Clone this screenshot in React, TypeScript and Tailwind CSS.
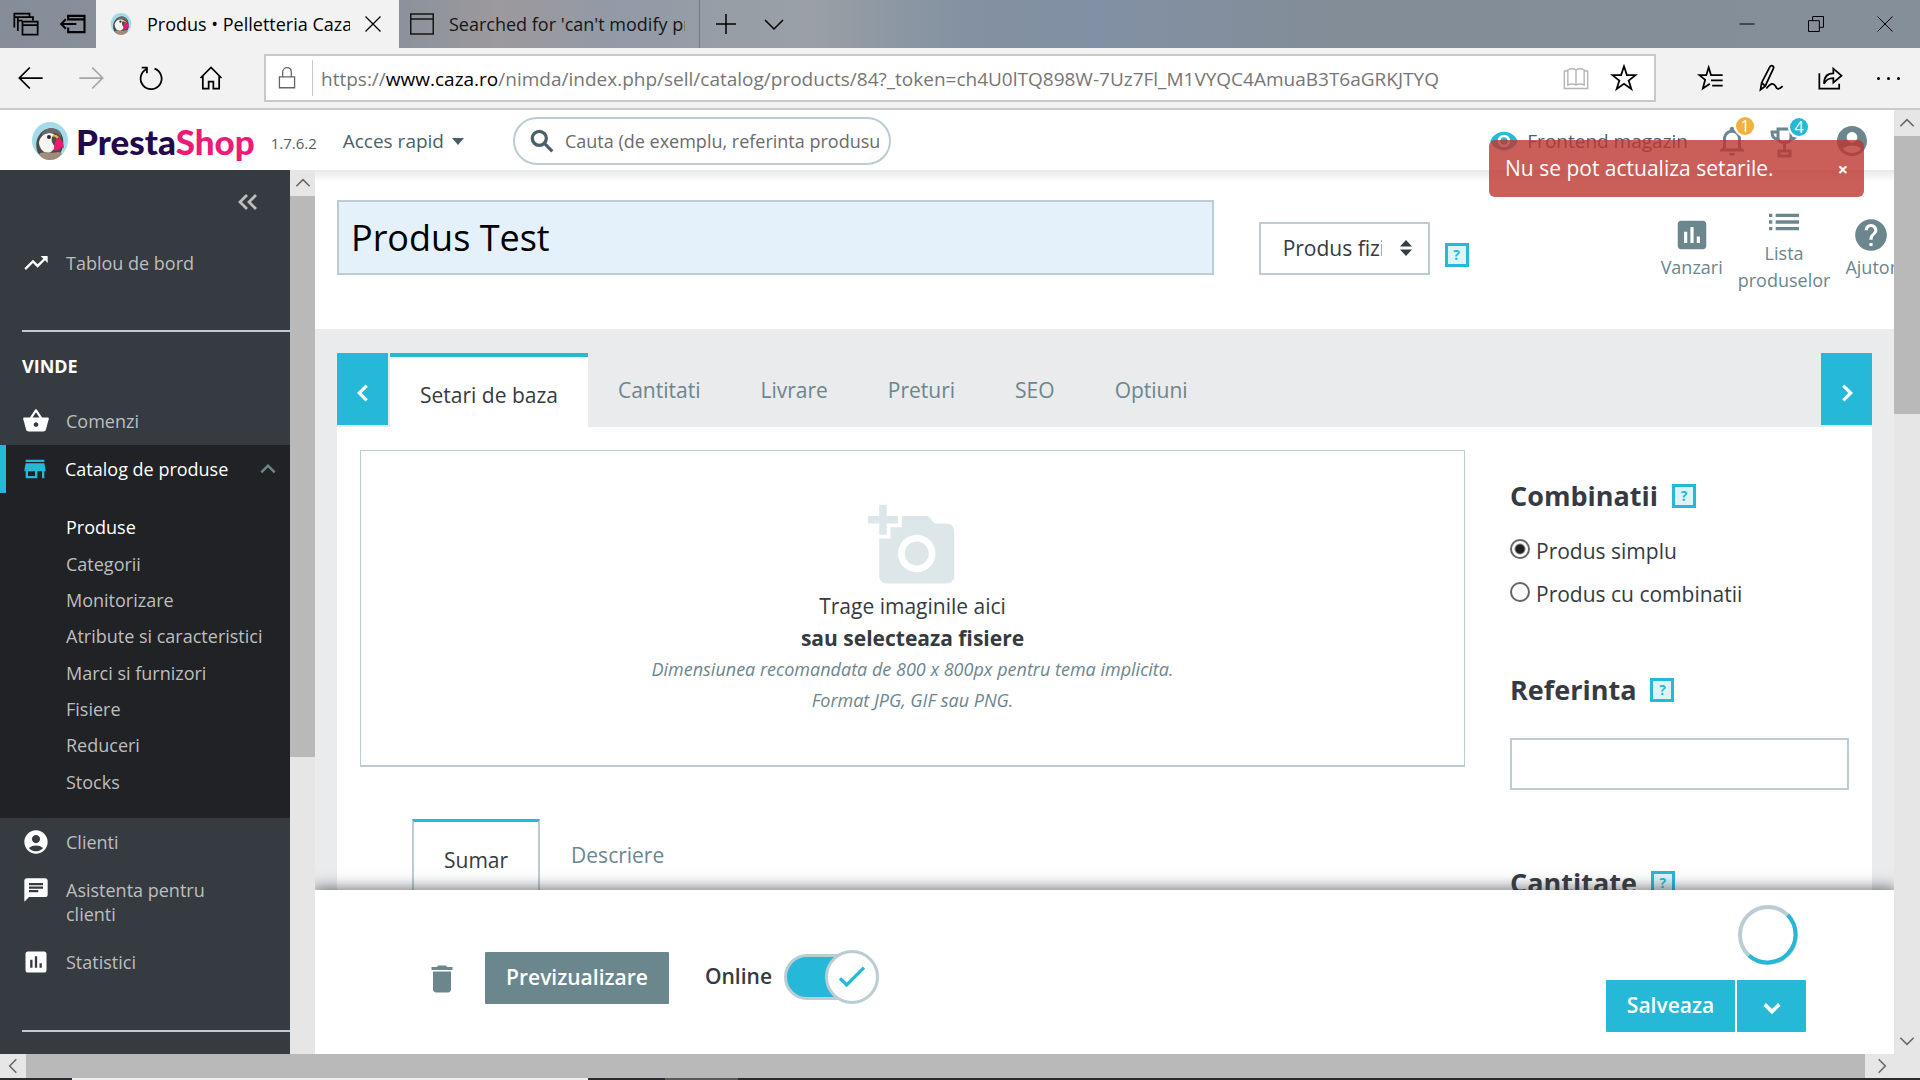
import React from "react";
import {
  MdAccountCircle,
  MdAddAPhoto,
  MdAssessment,
  MdChat,
  MdDelete,
  MdHelp,
  MdList,
  MdNotificationsNone,
  MdShoppingBasket,
  MdStore,
  MdTrendingUp,
  MdVisibility,
} from "react-icons/md";

const catalogLinks = [
  "Produse",
  "Categorii",
  "Monitorizare",
  "Atribute si caracteristici",
  "Marci si furnizori",
  "Fisiere",
  "Reduceri",
  "Stocks",
];

const lowerLinks = [
  { label: "Clienti", icon: MdAccountCircle },
  { label: "Asistenta pentru clienti", icon: MdChat },
  { label: "Statistici", icon: MdAssessment },
];

const productTabs = ["Cantitati", "Livrare", "Preturi", "SEO", "Optiuni"];

type LineIconProps = {
  d: string;
  className?: string;
  size?: number;
  width?: number;
};

// thin outline icon on a 24 grid
function LineIcon({ d, className = "", size = 24, width = 1.5 }: LineIconProps) {
  return (
    <svg
      width={size}
      height={size}
      viewBox="0 0 24 24"
      fill="none"
      stroke="currentColor"
      strokeWidth={width}
      className={`shrink-0 ${className}`}
      aria-hidden="true"
    >
      <path d={d} />
    </svg>
  );
}

function Puffin({ className = "" }: { className?: string }) {
  return (
    <svg viewBox="0 0 36 38" className={`shrink-0 ${className}`} aria-hidden="true">
      <ellipse cx="18" cy="18.500" rx="18" ry="18.500" fill="#a4dbe8" />
      <path d="M6 31C3 24 4 17 8 12c4-6 13-8 19-3 4 4 5 9 4 15-1 6-4 10-8 11-7 2-14 1-17-4z" fill="#4b4a4d" />
      <path d="M7 20c1-5 5-9 10-9 5 0 8 3 8 8-1 6-4 11-9 12-5 0-9-5-9-11z" fill="#f5f4f2" />
      <path d="M9 13C12 6 22 4 27 9c2 2 2 4 2 6-3-4-7-5-11-4-4 0-6 2-9 2z" fill="#6a686a" />
      <path d="M21 13c3-1 6 1 7 4l-4 9c-3-2-5-8-3-13z" fill="#f4b13e" />
      <path d="M20 15c2-1 4 0 5 2l-2 7c-3-2-4-6-3-9z" fill="#4b4a4d" />
      <path d="M26 15c3 2 6 6 6 11l-3-1c-1 3-4 4-7 3 0-5 1-9 4-13z" fill="#ea1a6e" />
      <circle cx="17" cy="15" r="2" fill="#2c2b2d" />
      <path d="M7 32c2-2 5-1 7-2 4 1 8 1 12 0 2 0 3 1 4 2-3 4-7 6-12 6S9 36 7 32z" fill="#a08c7b" />
    </svg>
  );
}

function HelpBox() {
  return (
    <button
      aria-label="Ajutor"
      className="flex h-6 w-6 shrink-0 items-center justify-center border-[3px] border-[#25b9d7] bg-[#def4f9] text-sm leading-none font-bold text-[#25b9d7]"
    >
      ?
    </button>
  );
}

function BrowserTabs() {
  return (
    <div className="flex h-12 shrink-0 items-stretch bg-[linear-gradient(90deg,#858e98_0%,#8b929b_21%,#9d999d_26%,#919aa6_32%,#9aa0a6_42%,#8391a1_50%,#8190a4_57%,#838d97_70%,#858f99_100%)] text-black">
      <div className="flex w-24 items-center gap-5 pl-3">
        <LineIcon size={28} d="M2 15V3h13v3M2 6h13M5 18V6h13v3M5 9h4M9 10h13v11H9zM9 13h13" />
        <LineIcon size={28} width={1.8} d="M7 9V5h14v14H7v-4M7 8h14M1 12h13M5 8l-4 4 4 4" />
      </div>
      <div className="flex w-[303px] items-center bg-[#f2f2f2] pr-4 pl-[14px]">
        <Puffin className="h-[22px] w-[22px]" />
        <span className="ml-[15px] w-[203px] overflow-hidden text-lg whitespace-nowrap">
          Produs • Pelletteria Caza
        </span>
        <button aria-label="Inchide fila" className="ml-auto">
          <LineIcon size={20} d="M3 3l18 18M21 3L3 21" />
        </button>
      </div>
      <div className="flex w-[301px] items-center border-r border-[#6f7780] pl-2 text-[#161616]">
        <LineIcon size={30} width={1.2} d="M3 4h18v16H3zM3 8h18" />
        <span className="ml-3 w-[236px] overflow-hidden text-lg whitespace-nowrap">
          Searched for 'can't modify product'
        </span>
      </div>
      <div className="flex items-center gap-6 pl-[14px]">
        <button aria-label="Fila noua">
          <LineIcon d="M12 2v20M2 12h20" />
        </button>
        <button aria-label="Previzualizari file">
          <LineIcon d="M3 8l9 9 9-9" />
        </button>
      </div>
      <div className="ml-auto flex items-center gap-[49px] pr-[25px]">
        <button aria-label="Minimizeaza">
          <LineIcon size={20} width={1.2} d="M3 12h18" />
        </button>
        <button aria-label="Restaureaza">
          <LineIcon size={20} width={1.2} d="M3 8h13v13H3zM8 8V3h13v13h-5" />
        </button>
        <button aria-label="Inchide">
          <LineIcon size={20} width={1.2} d="M3 3l18 18M21 3L3 21" />
        </button>
      </div>
    </div>
  );
}

function BrowserToolbar() {
  return (
    <div className="flex h-[62px] shrink-0 items-center border-b-2 border-[#cbcbcb] bg-[#f2f2f2] text-black">
      <div className="flex w-[264px] items-center gap-8 pl-[17px]">
        <button aria-label="Inapoi">
          <LineIcon size={28} d="M22 12H3M11 3l-9 9 9 9" />
        </button>
        <button aria-label="Inainte" className="text-[#a5a5a5]">
          <LineIcon size={28} d="M2 12h19M13 3l9 9-9 9" />
        </button>
        <button aria-label="Reimprospateaza">
          <LineIcon size={28} d="M15 4A9 9 0 1 1 8 4.500M4 3h4.500v5" />
        </button>
        <button aria-label="Acasa">
          <LineIcon size={28} d="M3 12l9-9 9 9M5 10v11h5v-6h4v6h5V10" />
        </button>
      </div>
      <div className="flex h-12 flex-1 items-center border-2 border-[#c9c9c9] bg-white">
        <LineIcon size={26} width={1.2} className="ml-2 text-[#666]" d="M5 11h14v10H5zM8 11V7c0-6 8-6 8 0v4" />
        <span className="ml-3 h-9 w-px bg-[#c9c9c9]" />
        <span className="ml-2 pt-0.5 text-[19px] whitespace-nowrap text-[#767676]">
          https://<span className="text-black">www.caza.ro</span>
          /nimda/index.php/sell/catalog/products/84?_token=ch4U0lTQ898W-7Uz7Fl_M1VYQC4AmuaB3T6aGRKJTYQ
        </span>
        <LineIcon
          size={28}
          width={1.2}
          className="ml-auto text-[#b5b5b5]"
          d="M12 5c-2-1-5-1-7 0v13c2-1 5-1 7 0 2-1 5-1 7 0V5c-2-1-5-1-7 0v13M5 6H2v15h20V6h-3"
        />
        <button aria-label="Adauga la favorite" className="mr-4 ml-5">
          <LineIcon size={28} d="M12 2l2.500 7.500H22l-6 4.700 2.300 7.300-6.300-4.500-6.300 4.500L8 14.200 2 9.500h7.500z" />
        </button>
      </div>
      <div className="flex w-[264px] items-center gap-8 pl-[41px]">
        <button aria-label="Favorite">
          <LineIcon size={28} d="M13 9.500h-1L10 3 8 9.500H2l5 4L5 21l6-4M13 9.500h9M12 14h10M13 18.500h9" />
        </button>
        <button aria-label="Note">
          <LineIcon size={28} d="M3 22l1-6L11 2.500c1-2 4-1 3 1.500L7 19zM4 16l3 3M8 21c4-5 6-5 8-2 1 3 3 3 6 0" />
        </button>
        <button aria-label="Partajeaza">
          <LineIcon size={28} d="M2 8v13h17v-4M6 17c0-6 3-9 8-9V4l7 6-7 6v-4c-4 0-6 1-8 5z" />
        </button>
        <button aria-label="Setari" className="flex gap-[7px]">
          <i className="h-[3px] w-[3px] rounded-full bg-black" />
          <i className="h-[3px] w-[3px] rounded-full bg-black" />
          <i className="h-[3px] w-[3px] rounded-full bg-black" />
        </button>
      </div>
    </div>
  );
}

function AppHeader() {
  return (
    <header className="relative z-10 flex h-[60px] shrink-0 items-center bg-white pt-0.5 pr-6 pl-8 text-[19px] text-[#4b5f66]">
      <Puffin className="h-[38px] w-9" />
      <span className="ml-2 font-[Lato] text-[35px] leading-none font-black text-[#22094b]">
        Presta<span className="text-[#ee1a75]">Shop</span>
      </span>
      <span className="mt-1 ml-4 w-14 text-[15px]">1.7.6.2</span>
      <button className="ml-4 flex items-center gap-2">
        Acces rapid
        <span className="border-x-[6px] border-t-[7px] border-x-transparent border-t-current" />
      </button>
      <label className="ml-[49px] flex h-12 w-[378px] items-center rounded-full border-2 border-[#bbcdd2] pr-2.5 pl-3.5">
        <LineIcon size={26} width={3} d="M9.500 3a6.500 6.500 0 1 1 0 13 6.500 6.500 0 0 1 0-13zM14.500 14.500l7 7" />
        <input
          type="text"
          aria-label="Cauta"
          placeholder="Cauta (de exemplu, referinta produsului"
          className="ml-2.5 w-[315px] text-lg placeholder:text-[#6b6b6b] focus:outline-none"
        />
      </label>
      <div className="ml-auto flex items-center">
        <a href="#shop" className="flex items-center gap-2">
          <MdVisibility className="h-[30px] w-[30px] text-[#25b9d7]" />
          <span>Frontend magazin</span>
        </a>
        <button aria-label="Notificari" className="relative ml-[26px]">
          <MdNotificationsNone className="h-9 w-9 text-[#6c868e]" />
          <span className="absolute -top-1.5 -right-1 flex h-[18px] w-[18px] items-center justify-center rounded-full bg-[#f1b13d] text-base leading-none text-white ring-2 ring-white">
            1
          </span>
        </button>
        <button aria-label="Realizari" className="relative ml-5">
          <svg viewBox="0 0 30 34" className="h-[34px] w-[30px]" fill="none" stroke="#6c868e" strokeWidth="3">
            <path d="M8 5h13v9c0 6-13 6-13 0zM8 8H2c0 5 2 7 6 7M21 8h6c0 5-2 7-6 7M14.500 19v7M9 27h11v5H9z" />
          </svg>
          <span className="absolute -top-1.5 -right-2 flex h-[18px] w-[18px] items-center justify-center rounded-full bg-[#25b9d7] text-base leading-none text-white ring-2 ring-white">
            4
          </span>
        </button>
        <button aria-label="Cont" className="ml-[34px]">
          <MdAccountCircle className="h-9 w-9 text-[#6c868e]" />
        </button>
      </div>
    </header>
  );
}

function Sidebar() {
  return (
    <nav className="w-[290px] shrink-0 overflow-hidden bg-[#363a41] text-lg leading-6 text-[#bebebe]">
      <div className="flex h-16 items-center justify-end pr-[30px]">
        <button aria-label="Restrange meniul">
          <LineIcon size={24} width={2.8} d="M11 5l-7 7 7 7M20 5l-7 7 7 7" />
        </button>
      </div>
      <a href="#dashboard" className="flex h-[58px] items-center pl-[22px]">
        <MdTrendingUp className="mr-4 h-7 w-7 shrink-0 text-white" />
        Tablou de bord
      </a>
      <hr className="mt-[38px] ml-[22px] border-t-2 border-[#bbcdd2]" />
      <h2 className="mt-[22px] pl-[22px] font-bold text-white">VINDE</h2>
      <a href="#orders" className="mt-[19px] flex h-12 items-center pl-[22px]">
        <MdShoppingBasket className="mr-4 h-7 w-7 shrink-0 text-white" />
        Comenzi
      </a>
      <div className="bg-[#202226] pb-[18px]">
        <a href="#catalog" className="flex h-12 items-center border-l-[6px] border-[#25b9d7] pl-[15px] text-white">
          <MdStore className="mr-4 h-7 w-7 shrink-0 text-[#25b9d7]" />
          Catalog de produse
          <LineIcon size={20} width={3} className="mr-3 ml-auto text-[#6c868e]" d="M4 16l8-8 8 8" />
        </a>
        <ul className="mt-4 flex h-[291px] flex-col">
          {catalogLinks.map((label, idx) => (
            <li key={label} className="flex flex-1 items-center pl-[66px]">
              <a href="#catalog" className={idx === 0 ? "text-white" : ""}>
                {label}
              </a>
            </li>
          ))}
        </ul>
      </div>
      {lowerLinks.map((item) => (
        <a key={item.label} href="#menu" className="flex items-start py-3 pr-20 pl-[22px]">
          <item.icon className="mr-4 h-7 w-7 shrink-0 -my-0.5 text-white" />
          {item.label}
        </a>
      ))}
      <hr className="mt-11 ml-[22px] border-t-2 border-[#bbcdd2]" />
    </nav>
  );
}

function ProductHeader() {
  return (
    <div className="flex h-[159px] shrink-0 items-start bg-[linear-gradient(#e6e9e9,#fff_12px)] pt-[30px] pl-[22px]">
      <input
        type="text"
        aria-label="Numele produsului"
        defaultValue="Produs Test"
        className="h-[75px] min-w-0 flex-1 border-2 border-[#bbcdd2] bg-[#e4f1fb] px-3 text-4xl text-black"
      />
      <div className="mt-[22px] ml-[45px] flex items-end">
        <div className="relative">
          <select
            aria-label="Tip produs"
            className="h-[53px] w-[171px] appearance-none border-2 border-[#bbcdd2] bg-white pr-[46px] pl-[22px] text-[21px] text-[#363a41]"
          >
            <option>Produs fizic</option>
          </select>
          <svg viewBox="0 0 12 16" className="pointer-events-none absolute top-[18px] right-[18px] h-4 w-3" fill="#363a41">
            <path d="M0 6.500L6 0l6 6.500zM0 9.500L6 16l6-6.500z" />
          </svg>
        </div>
        <div className="mb-2 ml-[15px]">
          <HelpBox />
        </div>
      </div>
      <div className="-mr-[3px] ml-48 flex items-start gap-[15px] text-lg leading-[27px] text-[#6c868e]">
        <a href="#sales" className="mt-4 flex flex-col items-center">
          <MdAssessment className="h-[38px] w-[38px]" />
          Vanzari
        </a>
        <a href="#list" className="mt-0.5 flex flex-col items-center text-center">
          <MdList className="-mb-0.5 h-10 w-10" />
          <span>
            Lista
            <br />
            produselor
          </span>
        </a>
        <a href="#help" className="mt-4 flex flex-col items-center">
          <MdHelp className="h-[38px] w-[38px]" />
          Ajutor
        </a>
      </div>
    </div>
  );
}

function ProductTabs() {
  return (
    <div className="flex h-[74px] shrink-0 items-start text-[21px] text-[#6c868e]">
      <button aria-label="Inapoi" className="flex h-[72px] w-[51px] items-center justify-center bg-[#25b9d7] pt-2 text-white">
        <LineIcon size={22} width={3.5} d="M16 4l-8 8 8 8" />
      </button>
      <button className="ml-0.5 h-full border-t-4 border-[#25b9d7] bg-white px-[30px] pt-2 text-[#363a41]">
        Setari de baza
      </button>
      {productTabs.map((tab) => (
        <button key={tab} className="h-full px-[30px] pt-0.5">
          {tab}
        </button>
      ))}
      <button aria-label="Inainte" className="ml-auto flex h-[72px] w-[51px] items-center justify-center bg-[#25b9d7] pt-2 text-white">
        <LineIcon size={22} width={3.5} d="M8 4l8 8-8 8" />
      </button>
    </div>
  );
}

function MediaAndDescription() {
  return (
    <div className="min-w-0 flex-1">
      <button className="flex h-[317px] w-full flex-col items-center border border-b-2 border-[#bbcdd2] pt-[50px]">
        <MdAddAPhoto className="-mb-px h-[90px] w-[90px] shrink-0 text-[#dde6e9]" />
        <span className="text-[21px] leading-8 text-[#363a41]">Trage imaginile aici</span>
        <span className="text-[21px] leading-8 font-bold text-[#363a41]">sau selecteaza fisiere</span>
        <span className="text-lg leading-[31px] text-[#6c868e] italic">
          Dimensiunea recomandata de 800 x 800px pentru tema implicita.
          <br />
          Format JPG, GIF sau PNG.
        </span>
      </button>
      <div className="mt-[52px] ml-[52px] flex text-[21px] text-[#6c868e]">
        <button className="h-20 border-x-2 border-t-[3px] border-x-[#bbcdd2] border-t-[#25b9d7] px-[30px] text-[#363a41]">
          Sumar
        </button>
        <button className="h-20 px-[31px] pb-1.5">Descriere</button>
      </div>
    </div>
  );
}

function SectionTitle({ children }: { children: React.ReactNode }) {
  return (
    <div className="flex items-center gap-3.5">
      <h2 className="text-[27px] leading-9 font-bold text-[#363a41]">{children}</h2>
      <HelpBox />
    </div>
  );
}

function ProductOptions() {
  return (
    <aside className="w-[339px] shrink-0 pt-7 text-[21px] text-[#363a41]">
      <SectionTitle>Combinatii</SectionTitle>
      <div className="mt-[21px] space-y-[11px] leading-8">
        {["Produs simplu", "Produs cu combinatii"].map((label, idx) => (
          <label key={label} className="flex items-center gap-1.5">
            <input
              type="radio"
              name="combinations"
              defaultChecked={idx === 0}
              className="mb-1 h-5 w-5 appearance-none rounded-full border-2 border-[#666] bg-white checked:bg-[radial-gradient(circle,#1f1f1f_0_4px,#fff_6px)]"
            />
            {label}
          </label>
        ))}
      </div>
      <div className="mt-[62px]">
        <SectionTitle>Referinta</SectionTitle>
      </div>
      <input
        type="text"
        aria-label="Referinta"
        className="mt-[30px] h-[52px] w-full border-2 border-[#bbcdd2] px-3"
      />
      <div className="mt-[75px]">
        <SectionTitle>Cantitate</SectionTitle>
      </div>
    </aside>
  );
}

function ProductFooter() {
  return (
    <footer className="relative flex h-[164px] shrink-0 items-start bg-white pr-[88px] pl-[109px] text-[21px] shadow-[0_0_14px_2px_rgba(54,58,65,0.7)]">
      <button aria-label="Sterge" className="mt-[71px]">
        <MdDelete className="h-9 w-9 text-[#6c868e]" />
      </button>
      <button className="mt-[62px] ml-[25px] h-[52px] w-[184px] rounded-[1px] bg-[#6c868e] font-semibold text-white">
        Previzualizare
      </button>
      <label className="mt-[60px] ml-9 flex h-[54px] items-center gap-3 font-semibold text-[#363a41]">
        Online
        <span className="relative flex h-[54px] w-[95px] items-center">
          <input
            type="checkbox"
            role="switch"
            defaultChecked
            className="h-[46px] w-[80px] appearance-none rounded-full border-[3px] border-[#bbcdd2] bg-[#25b9d7]"
          />
          <span className="absolute right-0 flex h-[54px] w-[54px] items-center justify-center rounded-full border-[3px] border-[#bbcdd2] bg-white text-[#25b9d7]">
            <LineIcon size={32} width={2.5} d="M3 13l5 5L21 5" />
          </span>
        </span>
      </label>
      <div className="ml-auto flex flex-col pt-[15px]">
        <svg viewBox="0 0 60 60" className="mr-2 h-[60px] w-[60px] self-end" fill="none" strokeWidth="4">
          <circle cx="30" cy="30" r="28" stroke="#bbcdd2" />
          <path d="M49.800 10.200A28 28 0 0 1 11 50.500" stroke="#25b9d7" />
        </svg>
        <div className="mt-[15px] flex gap-0.5 text-white">
          <button className="h-[52px] w-[129px] rounded-[1px] bg-[#25b9d7] font-semibold">Salveaza</button>
          <button
            aria-label="Mai multe optiuni"
            className="flex h-[52px] w-[69px] items-center justify-center rounded-[1px] bg-[#25b9d7] pt-1"
          >
            <LineIcon size={22} width={4} d="M4 8l8 8 8-8" />
          </button>
        </div>
      </div>
    </footer>
  );
}

function Toast() {
  return (
    <div
      role="alert"
      className="absolute top-[30px] right-[30px] z-20 flex h-[57px] w-[375px] items-center justify-between rounded-md bg-[#bd362f]/80 pr-4 pl-4 text-[21px] text-white"
    >
      Nu se pot actualiza setarile.
      <button aria-label="Inchide" className="text-lg font-bold">
        ×
      </button>
    </div>
  );
}

export default function App() {
  return (
    <div className="flex h-screen flex-col overflow-hidden bg-white font-['Open_Sans',sans-serif]">
      <BrowserTabs />
      <BrowserToolbar />
      <div className="flex min-h-0 flex-1">
        <div className="relative flex min-w-0 flex-1 flex-col">
          <AppHeader />
          <Toast />
          <div className="flex min-h-0 flex-1">
            <Sidebar />
            <div className="w-[25px] shrink-0 bg-[#e6e6e6]">
              <div className="flex h-[26px] items-center justify-center text-[#666]">
                <LineIcon size={20} width={1.8} d="M4 16l8-8 8 8" />
              </div>
              <div className="h-[561px] bg-[#b9b9b9]" />
            </div>
            <main className="flex min-w-0 flex-1 flex-col overflow-hidden">
              <ProductHeader />
              <div className="flex min-h-0 flex-1 flex-col overflow-hidden bg-[#e9ebec] px-[22px] pt-6">
                <ProductTabs />
                <div className="flex min-h-0 flex-1 gap-[45px] bg-white px-[23px] pt-[23px]">
                  <MediaAndDescription />
                  <ProductOptions />
                </div>
              </div>
              <ProductFooter />
            </main>
          </div>
        </div>
        <div className="flex w-[26px] shrink-0 flex-col bg-[#e6e6e6] text-[#666]">
          <div className="flex h-[26px] items-center justify-center">
            <LineIcon size={20} width={1.8} d="M4 16l8-8 8 8" />
          </div>
          <div className="h-[278px] bg-[#b9b9b9]" />
          <div className="mt-auto flex h-[26px] items-center justify-center">
            <LineIcon size={20} width={1.8} d="M4 8l8 8 8-8" />
          </div>
        </div>
      </div>
      <div className="flex h-6 shrink-0 items-center bg-[#e6e6e6] text-[#666]">
        <div className="flex w-[26px] justify-center">
          <LineIcon size={20} width={1.8} d="M16 4l-8 8 8 8" />
        </div>
        <div className="h-full flex-1 bg-[#b9b9b9]" />
        <div className="mr-[22px] flex w-[33px] justify-center">
          <LineIcon size={20} width={1.8} d="M8 4l8 8-8 8" />
        </div>
      </div>
      <div className="flex h-0.5 shrink-0 bg-[#2b2b2f]">
        <div className="ml-[72px] w-[516px] bg-[#efefef]" />
        <div className="ml-[77px] w-[73px] bg-[#5a5a5a]" />
      </div>
    </div>
  );
}
